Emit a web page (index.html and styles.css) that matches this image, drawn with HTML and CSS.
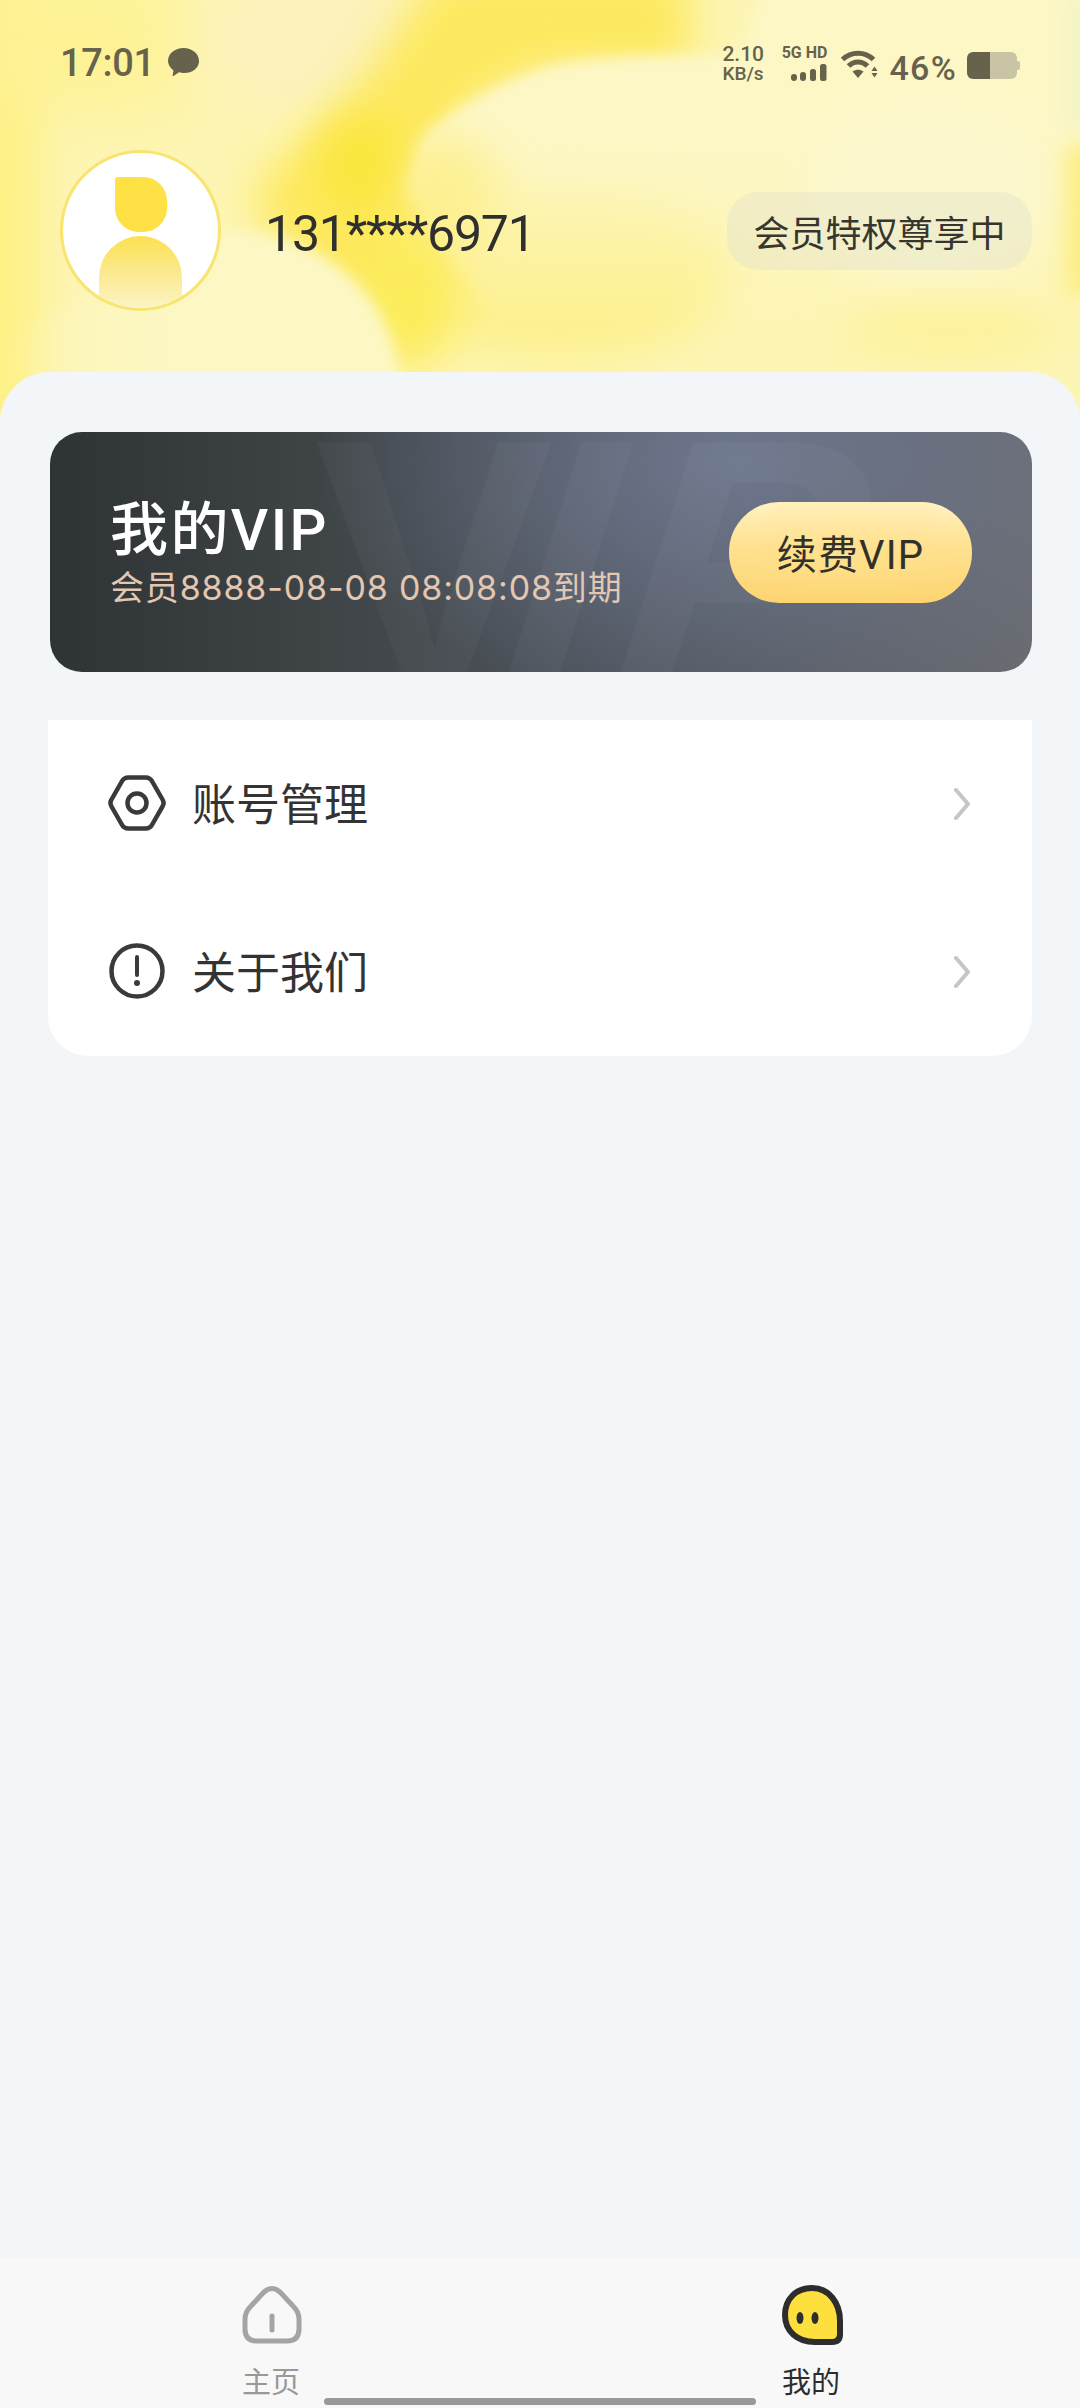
FILE: index.html
```html
<!DOCTYPE html>
<html lang="zh-CN">
<head>
  <meta charset="UTF-8" />
  <meta name="viewport" content="width=device-width, initial-scale=1.0" />
  <title>我的</title>
  <link rel="stylesheet" href="styles.css">
</head>
<body>
  <div class="page">
    <!-- 顶部渐变背景 -->
    <svg class="hero-bg" width="1080" height="440" viewBox="0 0 1080 440">
      <defs>
        <filter id="b40" x="-50%" y="-50%" width="200%" height="200%"><feGaussianBlur stdDeviation="36" /></filter>
        <filter id="b22" x="-50%" y="-50%" width="200%" height="200%"><feGaussianBlur stdDeviation="22" /></filter>
        <filter id="b7" x="-30%" y="-30%" width="160%" height="160%"><feGaussianBlur stdDeviation="7" /></filter>
        <filter id="b12" x="-100%" y="-30%" width="300%" height="160%"><feGaussianBlur stdDeviation="12" /></filter>
        <linearGradient id="creamFade" x1="0" y1="0" x2="0" y2="1">
          <stop offset="0" stop-color="#fdf7c6" />
          <stop offset=".45" stop-color="#fdf7c6" />
          <stop offset="1" stop-color="#fdf7c6" stop-opacity="0" />
        </linearGradient>
        <linearGradient id="blobFade" x1="0" y1="0" x2="1" y2="0">
          <stop offset="0" stop-color="#fdf7c4" stop-opacity="0" />
          <stop offset=".45" stop-color="#fdf7c4" />
          <stop offset="1" stop-color="#fdf7c4" />
        </linearGradient>
      </defs>
      <rect width="1080" height="440" fill="#fdf5b4" />
      <rect x="-60" y="-40" width="100" height="480" fill="#fef084" filter="url(#b22)" />
      <rect x="-40" y="-40" width="220" height="150" fill="#fef294" filter="url(#b40)" />
      <ellipse cx="560" cy="270" rx="170" ry="90" fill="#fdf08e" filter="url(#b22)" />
      <ellipse cx="320" cy="40" rx="115" ry="70" fill="#fcf2bc" filter="url(#b22)" />
      <path d="M440 -30H690V70H540L470 110L430 240L380 340L300 300L250 190L340 110Z" fill="#fde95e" filter="url(#b22)" />
      <ellipse cx="362" cy="165" rx="46" ry="50" fill="#fbe63e" filter="url(#b22)" />
      <ellipse cx="410" cy="300" rx="46" ry="70" fill="#fcec5a" filter="url(#b22)" />
      <path d="M1120 -40H770L742 56C640 54 575 58 540 70C490 88 445 112 420 140L405 190L500 330H1120Z" fill="url(#creamFade)" filter="url(#b7)" />
      <ellipse cx="450" cy="190" rx="50" ry="55" fill="#fdee84" opacity=".7" filter="url(#b22)" />
      <ellipse cx="930" cy="190" rx="130" ry="90" fill="#fcf7cc" filter="url(#b22)" />
      <ellipse cx="950" cy="332" rx="110" ry="22" fill="#fdf196" filter="url(#b22)" />
      <path d="M80 300C140 250 200 230 250 232C300 236 345 262 375 305C392 335 398 355 402 420H0V340Z" fill="url(#blobFade)" filter="url(#b7)" />
      <rect x="1068" y="145" width="30" height="150" fill="#fdec78" filter="url(#b12)" />
      <rect x="1070" y="0" width="24" height="125" fill="#eff3c4" filter="url(#b12)" />
    </svg>

    <header class="hero">
      <div class="statusbar">
        <div class="status-left">
          <span class="time">17:01</span>
          <svg class="bubble" width="31" height="29" viewBox="0 0 31 29">
            <path d="M15.500 0C24 0 31 5.500 31 13C31 20.500 24 25 16.500 25C14.500 25 12.500 24.800 11 24.300L5.500 28C5 28.300 4.500 28 4.600 27.400L5.500 22.500C2.500 20 0 17 0 13C0 5.500 7 0 15.500 0Z" fill="#67624c" />
          </svg>
        </div>
        <div class="status-right">
          <div class="netspeed"><span>2.10</span><span class="unit">KB/s</span></div>
          <div class="signal">
            <span class="signal-label">5G HD</span>
            <svg width="36" height="17" viewBox="0 0 36 17" fill="#67624c">
              <rect x="0" y="10" width="6" height="7" rx="3" />
              <rect x="9" y="8" width="6" height="9" rx="3" />
              <rect x="19" y="5" width="6" height="12" rx="2.500" />
              <rect x="29" y="0" width="6.500" height="17" rx="2.500" />
            </svg>
          </div>
          <svg class="wifi" width="37" height="29" viewBox="0 0 37 29" fill="#67624c">
            <path d="M1.500 9.500C10 1 24 1 32.500 9.500" fill="none" stroke="#67624c" stroke-width="5" />
            <path d="M7.500 16C13 10.500 21 10.500 26.500 16" fill="none" stroke="#67624c" stroke-width="5" />
            <path d="M11.500 21.500C15 19 19 19 22.500 21.500L17 28Z" />
            <path d="M33.500 16.500L36.500 21H30.500Z" />
            <path d="M30.500 23H36.500L33.500 27.500Z" />
          </svg>
          <span class="percent">46%</span>
          <div class="battery"><div class="battery-nub"></div></div>
        </div>
      </div>

      <div class="profile">
        <div class="avatar">
          <div class="avatar-head"></div>
          <div class="avatar-body"></div>
        </div>
        <span class="phone">131****6971</span>
        <span class="member-tag">会员特权尊享中</span>
      </div>
    </header>

    <main class="panel">
      <section class="vip-card">
        <span class="vip-mark">V<i>IP</i></span>
        <div class="vip-info">
          <div class="vip-title">我的VIP</div>
          <div class="vip-expire">会员8888-08-08 08:08:08到期</div>
        </div>
        <button class="vip-renew">续费VIP</button>
      </section>

      <section class="menu">
        <div class="menu-row">
          <svg class="menu-icon" width="58" height="56" viewBox="0 0 58 56" fill="none" stroke="#3a3a3a" stroke-width="4.500">
            <path d="M3.500 24.500L13.500 7C15 4 17.500 2.500 20.500 2.500H37.500C40.500 2.500 43 4 44.500 7L54.500 24.500C56 27 56 29 54.500 31.500L44.500 49C43 52 40.500 53.500 37.500 53.500H20.500C17.500 53.500 15 52 13.500 49L3.500 31.500C2 29 2 27 3.500 24.500Z" />
            <circle cx="29" cy="28" r="9.500" />
          </svg>
          <span class="menu-label">账号管理</span>
          <svg class="chevron" width="16" height="32" viewBox="0 0 16 32" fill="none" stroke="#c6c6c6" stroke-width="4" stroke-linecap="round" stroke-linejoin="round">
            <path d="M2 2L14 16L2 30" />
          </svg>
        </div>
        <div class="menu-row">
          <svg class="menu-icon" width="58" height="56" viewBox="0 0 58 56" fill="none" stroke="#3a3a3a" stroke-width="4.500">
            <circle cx="29" cy="28" r="25.500" />
            <path d="M29 14V32" stroke-width="4" stroke-linecap="round" />
            <circle cx="29" cy="40" r="3" fill="#3a3a3a" stroke="none" />
          </svg>
          <span class="menu-label">关于我们</span>
          <svg class="chevron" width="16" height="32" viewBox="0 0 16 32" fill="none" stroke="#c6c6c6" stroke-width="4" stroke-linecap="round" stroke-linejoin="round">
            <path d="M2 2L14 16L2 30" />
          </svg>
        </div>
      </section>
    </main>

    <nav class="tabbar">
      <div class="tab">
        <svg width="60" height="60" viewBox="0 0 60 60" fill="none" stroke="#a4a4a4" stroke-width="5">
          <path d="M22 7Q30 0 38 7L51 21Q57 27 57 34V44Q57 56 45 56H15Q3 56 3 44V34Q3 27 9 21Z" />
          <path d="M30 31V45" stroke-linecap="round" />
        </svg>
        <span>主页</span>
      </div>
      <div class="tab active">
        <svg width="62" height="60" viewBox="0 0 62 60">
          <path d="M30 3C47 3 58 18 58 36V49Q58 57 50 57H33C15 57 3 46 3 30C3 14 14 3 30 3Z" fill="#fde03e" stroke="#2d2d2d" stroke-width="6" />
          <ellipse cx="18" cy="33" rx="3.500" ry="6" fill="#2d2d2d" />
          <ellipse cx="33" cy="33" rx="3.500" ry="6" fill="#2d2d2d" />
        </svg>
        <span>我的</span>
      </div>
      <div class="home-indicator"></div>
    </nav>
  </div>
</body>
</html>
```

FILE: styles.css
```css
* { box-sizing: border-box; margin: 0; padding: 0; }

:root {
  --status: #67624c;
  --text: #333;
  --sans: Roboto, "Noto Sans CJK SC", sans-serif;
}

body {
  width: 1080px;
  height: 2408px;
  overflow: hidden;
  font-family: var(--sans);
  color: var(--text);
}

.page {
  position: relative;
  width: 1080px;
  height: 2408px;
  display: flex;
  flex-direction: column;
  overflow: hidden;
  background: #f3f6f9;
}

/* ====== 顶部区域 ====== */
.hero-bg {
  position: absolute;
  top: 0;
  left: 0;
}

.hero {
  position: relative;
  height: 372px;
  flex: none;
}

.statusbar {
  height: 150px;
  padding: 46px 63px 0 60px;
  display: flex;
  justify-content: space-between;
  align-items: flex-start;
  color: var(--status);
}

.status-left {
  display: flex;
  align-items: center;
  gap: 13px;
  height: 34px;
}

.time {
  font-size: 38px;
  font-weight: 500;
  line-height: 34px;
  letter-spacing: -.3px;
}

.bubble { margin-top: -2px; }

.status-right {
  display: flex;
  align-items: flex-start;
}

.netspeed {
  width: 46px;
  display: flex;
  flex-direction: column;
  font-size: 21px;
  line-height: 19px;
  font-weight: 500;
  white-space: nowrap;
  margin-top: -1px;
}

.netspeed .unit { font-size: 19px; }

.signal {
  width: 48px;
  margin-left: 11px;
  display: flex;
  flex-direction: column;
  align-items: flex-end;
  gap: 4px;
}

.signal-label {
  font-size: 16px;
  line-height: 14px;
  font-weight: 700;
  white-space: nowrap;
}

.wifi { margin-left: 14px; margin-top: 4px; }

.percent {
  margin-left: 11px;
  font-size: 34px;
  line-height: 34px;
  font-weight: 500;
  letter-spacing: 1.3px;
  margin-top: 5px;
}

.battery {
  position: relative;
  width: 50px;
  height: 27px;
  margin-left: 10px;
  margin-top: 6px;
  border-radius: 6px;
  background: linear-gradient(90deg, #67624c 0 23px, #c8c4a4 23px);
}

.battery-nub {
  position: absolute;
  right: -3px;
  top: 9px;
  width: 3px;
  height: 9px;
  border-radius: 0 2px 2px 0;
  background: #c8c4a4;
}

.profile {
  display: flex;
  align-items: center;
  padding: 0 48px 0 60px;
}

.avatar {
  position: relative;
  flex: none;
  width: 161px;
  height: 161px;
  border: 3px solid #f9e46f;
  border-radius: 50%;
  background: #fff;
  overflow: hidden;
}

.avatar-head {
  position: absolute;
  left: 52px;
  top: 24px;
  width: 52px;
  height: 55px;
  background: #fde145;
  border-radius: 3px 24px 24px 24px;
}

.avatar-body {
  position: absolute;
  left: 36px;
  top: 83px;
  width: 83px;
  height: 80px;
  border-radius: 42px 42px 0 0;
  background: linear-gradient(180deg, #fbe14f 0%, #fbe98f 45%, #fcf6cf 100%);
}

.phone {
  margin-left: 44px;
  margin-top: 7px;
  font-size: 50px;
  line-height: 60px;
  letter-spacing: -1.2px;
  color: #2f2f2f;
}

.member-tag {
  margin-left: auto;
  width: 305px;
  height: 78px;
  display: flex;
  align-items: center;
  justify-content: center;
  border-radius: 32px;
  background: rgba(225, 225, 205, .4);
  font-size: 36px;
  color: #36362e;
}

/* ====== 主面板 ====== */
.panel {
  position: relative;
  flex: 1;
  padding: 60px 48px 0;
  background: #f3f6f9;
  border-radius: 50px 50px 0 0;
}

.vip-card {
  position: relative;
  height: 240px;
  margin: 0 0 48px 2px;
  padding: 0 60px 0 60px;
  display: flex;
  align-items: center;
  justify-content: space-between;
  overflow: hidden;
  border-radius: 32px;
  background:
    radial-gradient(ellipse 420px 260px at 70% 12%, rgba(112, 122, 146, .9), rgba(112, 122, 146, 0)),
    linear-gradient(90deg, #2e3336 0%, #3f4447 28%, #50565f 60%, #6a6c72 100%);
}

.vip-mark {
  position: absolute;
  left: 264px;
  top: -47px;
  font: 700 360px/1 "Liberation Sans", sans-serif;
  white-space: nowrap;
  color: rgba(255, 255, 255, .03);
}

.vip-mark i {
  display: inline-block;
  margin-left: -64px;
  letter-spacing: 12px;
  transform: skewX(-7deg);
  transform-origin: bottom left;
}

.vip-info {
  position: relative;
  color: #fff;
}

.vip-title {
  font-size: 58px;
  font-weight: 500;
  line-height: 68px;
  letter-spacing: 2.4px;
}

.vip-expire {
  font-family: Inter, "Noto Sans CJK SC", sans-serif;
  font-size: 34px;
  line-height: 40px;
  margin-top: 4px;
  letter-spacing: .85px;
  color: #e2c7b3;
  white-space: nowrap;
}

.vip-renew {
  position: relative;
  flex: none;
  width: 243px;
  height: 101px;
  border: 0;
  border-radius: 50px;
  font-family: var(--sans);
  font-size: 40px;
  letter-spacing: 1.2px;
  color: #33302a;
  background:
    radial-gradient(ellipse 130px 60px at 50% 50%, rgba(255, 226, 140, .4), rgba(255, 226, 140, 0)),
    linear-gradient(180deg, #fff1c0 0%, #ffe190 45%, #fdd470 100%);
}

.menu {
  height: 336px;
  padding: 0 38px 0 60px;
  background: #fff;
  border-radius: 0 0 40px 40px;
}

.menu-row {
  height: 168px;
  display: flex;
  align-items: center;
  gap: 26px;
}

.menu-icon { flex: none; margin-top: -2px; }

.menu-label {
  margin-top: 3px;
  font-size: 44px;
  line-height: 52px;
  color: var(--text);
}

.chevron {
  margin-left: auto;
  margin-right: 24px;
}

/* ====== 底部导航 ====== */
.tabbar {
  position: relative;
  flex: none;
  height: 150px;
  padding: 27px 0 0 242px;
  display: flex;
  gap: 480px;
  background: #f8f8f8;
}

.tab {
  width: 60px;
  display: flex;
  flex-direction: column;
  align-items: flex-start;
  gap: 20px;
  font-size: 29px;
  line-height: 36px;
  color: #999;
}

.tab svg { flex: none; }

.tab.active { color: #2d2d2d; }

.home-indicator {
  position: absolute;
  left: 324px;
  bottom: 3px;
  width: 432px;
  height: 7px;
  border-radius: 4px;
  background: #999;
}
```
